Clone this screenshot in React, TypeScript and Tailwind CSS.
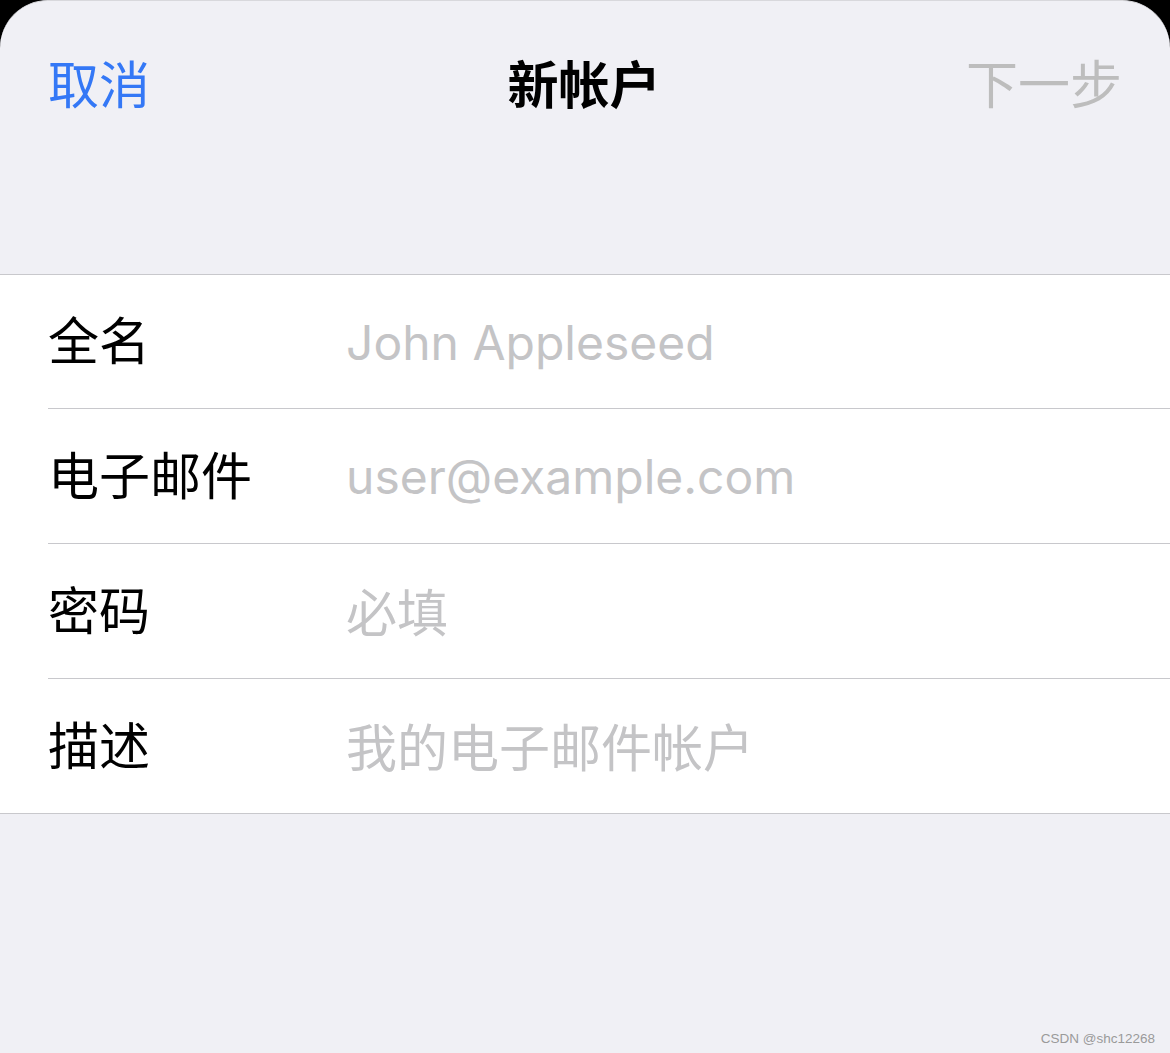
import React from "react";

const rows = [
  { label: "全名", placeholder: "John Appleseed", cjk: false },
  { label: "电子邮件", placeholder: "user@example.com", cjk: false },
  { label: "密码", placeholder: "必填", cjk: true },
  { label: "描述", placeholder: "我的电子邮件帐户", cjk: true },
];

const heights = ["h-[134px]", "h-[135px]", "h-[135px]", "h-[134px]"];

export default function App() {
  return (
    <div
      className="w-[1170px] h-[1053px] bg-black overflow-hidden"
      style={{ fontFamily: 'Inter, "Noto Sans CJK SC", sans-serif' }}
    >
      <div className="relative h-full bg-[#f0f0f5] rounded-t-[48px] border-t border-[#d8d8dc] flex flex-col">
        <div className="h-[169px] grid grid-cols-[1fr_auto_1fr] items-center px-[50px]">
          <span className="justify-self-start text-[51px] leading-none text-[#3478f6] -ml-[2px] -mt-[1px]">取消</span>
          <span className="text-[51px] leading-none font-bold text-black -ml-[2px]">新帐户</span>
          <span className="justify-self-end text-[52px] leading-none text-[#bdbdbd] -mr-[2px]">下一步</span>
        </div>
        <div className="h-[104px]" />
        <div className="bg-white border-t border-b border-[#c8c8cc]">
          {rows.map((r, i) => (
            <div key={r.label} className="pl-[48px]">
              <div
                className={`${heights[i]} flex items-center ${
                  i < rows.length - 1 ? "border-b border-[#c8c8cc]" : ""
                }`}
              >
                <span className="w-[298px] text-[51px] leading-none text-black">{r.label}</span>
                <span
                  className={`leading-none text-[#c4c4c6] ${
                    r.cjk ? "text-[51px] mt-[4px]" : "text-[48px] mt-[2px]"
                  }`}
                >
                  {r.placeholder}
                </span>
              </div>
            </div>
          ))}
        </div>
        <div className="flex-1" />
        <div
          className="absolute right-[15px] bottom-[4px] text-[13.5px] text-[#9a9a9a]"
          style={{ fontFamily: '"Liberation Sans", sans-serif' }}
        >
          CSDN @shc12268
        </div>
      </div>
    </div>
  );
}
